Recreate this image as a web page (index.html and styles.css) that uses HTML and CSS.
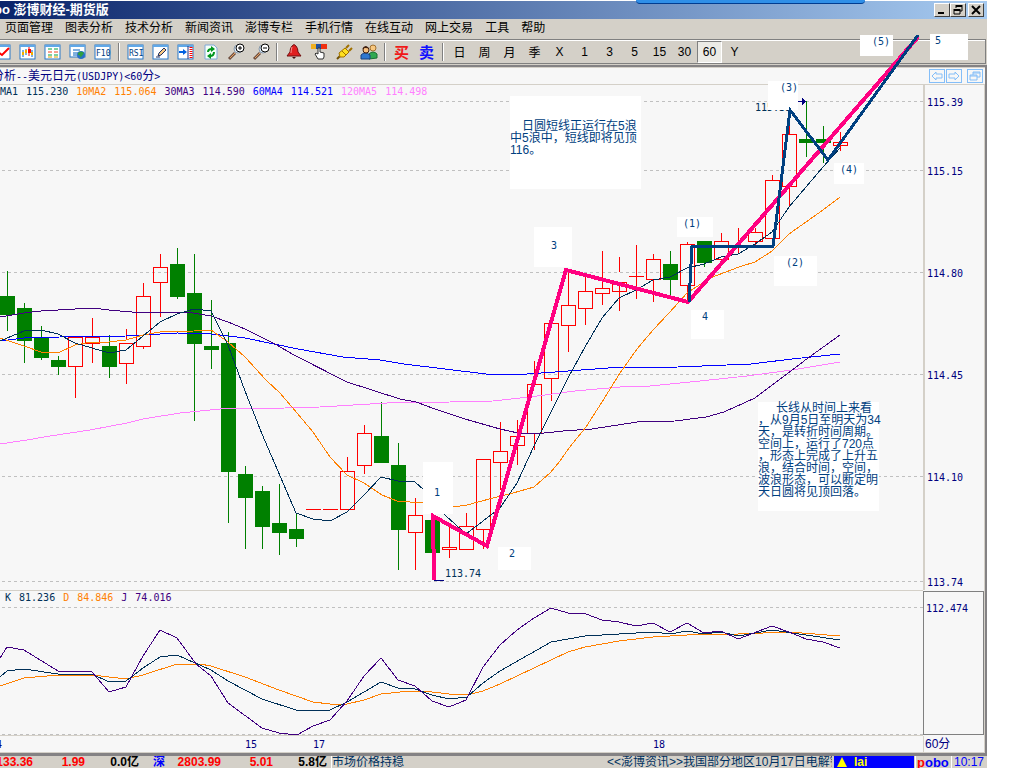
FILE: index.html
```
<!DOCTYPE html>
<html lang="zh-CN">
<head>
  <meta charset="UTF-8" />
  <title>澎博财经-期货版</title>
  <link rel="stylesheet" href="styles.css">
</head>
<body>
<div class="window">

  <!-- Title bar -->
  <header class="titlebar">
    <span class="app-name">bo 澎博财经-期货版</span>
    <span class="dock-tab"></span>
    <div class="win-btns">
      <button aria-label="最小化"><svg width="12" height="10"><path d="M2 8H8" stroke="#000" stroke-width="2"/></svg></button>
      <button aria-label="还原"><svg width="12" height="10"><path d="M4 0H10V2H4ZM2 4H8V6H2Z" fill="#000"/><path d="M4 0V3M10 0V6H8M2 4V9H8V4" stroke="#000" fill="none"/></svg></button>
      <button class="close" aria-label="关闭"><svg width="12" height="10"><path d="M2 1L10 9M10 1L2 9" stroke="#000" stroke-width="2"/></svg></button>
    </div>
  </header>

  <!-- Menu -->
  <nav class="menu">
    <button>页面管理</button>
    <button>图表分析</button>
    <button>技术分析</button>
    <button>新闻资讯</button>
    <button>澎博专栏</button>
    <button>手机行情</button>
    <button>在线互动</button>
    <button>网上交易</button>
    <button>工具</button>
    <button>帮助</button>
  </nav>

  <!-- Toolbar -->
  <div class="toolbar">
    <button aria-label="走势图"><svg class="ico"><rect class="frame" x="0" y="1" width="15" height="14"/><path d="M0 2H15" class="frame-top"/><path d="M3 8L7 11L14 4" stroke="red" stroke-width="2" fill="none"/></svg></button>
    <button aria-label="K线图"><svg class="ico"><rect class="frame" x="0" y="1" width="15" height="14"/><path d="M0 2H15" class="frame-top"/><path d="M3 6V13M6 5V11M12 6V13" stroke="#0060c0"/><path d="M2 8H4V11H2ZM5 6H7V9H5ZM11 8H13V11H11Z" fill="#f0b000"/><path d="M9 3V12" stroke="red"/><path d="M8 5H11V9H8Z" fill="red"/></svg></button>
    <button aria-label="报价表"><svg class="ico"><rect class="frame" x="0" y="1" width="15" height="14"/><path d="M0 2H15" class="frame-top"/><path d="M3 5H7M9 5H13" stroke="#00a040"/><path d="M3 8H7M9 8H13" stroke="#f04020"/><path d="M3 11H7M9 11H13" stroke="#00a040"/><path d="M3 13H7M9 13H13" stroke="#e0a000"/></svg></button>
    <button aria-label="资讯"><svg class="ico"><rect class="frame" x="0" y="1" width="15" height="12"/><path d="M0 2H15" class="frame-top"/><path d="M3 6H10M3 9H8M3 11H7" stroke="#0060c0"/><circle cx="11" cy="11" r="4" fill="#2870c8"/><path d="M8 9Q11 6 14 9L12 12L10 14Q11 11 8 11Z" fill="#30a040"/></svg></button>
    <button aria-label="F10"><svg class="ico"><rect class="frame" x="0" y="1" width="15" height="14"/><path d="M0 2H15" class="frame-top"/><text x="1" y="12" class="ico-text">F10</text></svg></button>
    <i class="sep"></i>
    <button aria-label="RSI"><svg class="ico"><rect class="frame" x="0" y="1" width="15" height="14"/><path d="M0 2H15" class="frame-top"/><text x="1" y="12" class="ico-text">RSI</text></svg></button>
    <button aria-label="画线"><svg class="ico"><rect class="frame" x="0" y="1" width="15" height="14"/><path d="M0 2H15" class="frame-top"/><path d="M6 9L11 4L13 6L8 11L5 12Z" fill="#f8c880" stroke="#203060"/><path d="M3 13H7" stroke="#203060"/></svg></button>
    <button aria-label="右移"><svg class="ico"><rect class="frame" x="0" y="1" width="15" height="14"/><path d="M0 2H15" class="frame-top"/><path d="M1 8H6" stroke="#0060e0" stroke-width="2"/><path d="M5 5L9 8L5 11Z" fill="#0060e0"/><path d="M10 2V15" stroke="#203080"/><path d="M13 3V15" stroke="red" stroke-width="3" stroke-dasharray="1 1"/></svg></button>
    <button aria-label="刷新"><svg class="ico"><path d="M2 1H11L14 4V15H2Z" fill="#f4fff8" stroke="#80a8d8"/><path d="M5 8Q5 5 9 5M11 8Q11 12 7 12" stroke="#00961e" stroke-width="2" fill="none"/><path d="M8 2L12 5L8 8ZM8 9L4 12L8 15Z" fill="#00961e"/></svg></button>
    <button aria-label="放大"><svg class="ico"><path d="M1 15L7 9" stroke="#705040" stroke-width="3"/><path d="M2 14L7 9" stroke="#e8a060"/><circle cx="10" cy="5" r="4" fill="#d8e8f8" stroke="#8898a8"/><circle cx="12" cy="4" r="4" fill="#fff" stroke="#000"/><path d="M10 4H14M12 2V6" stroke="#000"/></svg></button>
    <button aria-label="缩小"><svg class="ico"><path d="M1 15L7 9" stroke="#705040" stroke-width="3"/><path d="M2 14L7 9" stroke="#e8a060"/><circle cx="10" cy="5" r="4" fill="#d8e8f8" stroke="#8898a8"/><circle cx="12" cy="4" r="4" fill="#fff" stroke="#000"/><path d="M10 4H14" stroke="#000"/></svg></button>
    <i class="sep"></i>
    <button aria-label="预警"><svg class="ico"><path d="M6 2Q8 -1 10 2Q12 4 12 8L15 12H1L4 8Q4 4 6 2Z" fill="#e02020" stroke="#701010"/><path d="M6 3Q5 6 5 9" stroke="#ff9090" fill="none"/><path d="M6 13H10L8 15Z" fill="#401010"/></svg></button>
    <button aria-label="交易"><svg class="ico"><rect x="0" y="0" width="5" height="5" fill="#f0b020"/><rect x="5" y="0" width="5" height="5" fill="#2050a0"/><rect x="10" y="0" width="6" height="5" fill="#f03010"/><path d="M7 15L4 10L5 9L7 10V4H9V8L13 9V13L12 15Z" fill="#fff" stroke="#303030"/></svg></button>
    <button aria-label="连接"><svg class="ico"><path d="M1 15L4 12" stroke="#705000" stroke-width="2"/><path d="M3 9L9 4L13 8L8 13L4 13Z" fill="#ffe020" stroke="#a07000"/><path d="M10 4L13 1M13 7L16 4" stroke="#a07000" stroke-width="2"/><path d="M6 7L10 11" stroke="#a07000"/></svg></button>
    <button aria-label="用户"><svg class="ico"><path d="M8 15V10Q12 6 16 10V14Z" fill="#30a850" stroke="#187030"/><circle cx="12" cy="4" r="3" fill="#f8c880" stroke="#a07030"/><path d="M0 15V11Q4 7 9 11V15Z" fill="#3078d0" stroke="#184080"/><circle cx="5" cy="6" r="3" fill="#f8c080" stroke="#402010"/><path d="M1 5Q5 -1 8 5Q5 3 1 5" fill="#402010"/></svg></button>
    <i class="sep"></i>
    <button class="buy">买</button>
    <button class="sell">卖</button>
    <i class="sep"></i>
    <button>日</button>
    <button>周</button>
    <button>月</button>
    <button>季</button>
    <button>X</button>
    <button>1</button>
    <button>3</button>
    <button>5</button>
    <button>15</button>
    <button>30</button>
    <button class="active">60</button>
    <button>Y</button>
  </div>

  <!-- Chart -->
  <main class="panel">
    <div class="panel-head">
      <h1>分析<span>--</span>美元日元<span>(USDJPY)&lt;60</span>分<span>&gt;</span></h1>
      <div class="panel-btns">
        <button aria-label="上一个"><svg width="14" height="12"><path d="M2 6L6 2V4H12V8H6V10Z"/></svg></button>
        <button aria-label="下一个"><svg width="14" height="12"><path d="M12 6L8 2V4H2V8H8V10Z"/></svg></button>
        <button class="restore" aria-label="还原图表"><svg width="14" height="12"><path d="M5 5V2H12V7H9M5 3H12M2 5H9V10H2ZM2 6H9"/></svg></button>
      </div>
    </div>

    <div class="charts">
      <section class="plot">
        <div class="legend">
          <span class="c-ma5">MA1</span><span class="c-ma5">115.230</span>
          <span class="c-ma10">10MA2</span><span class="c-ma10">115.064</span>
          <span class="c-ma30">30MA3</span><span class="c-ma30">114.590</span>
          <span class="c-ma60">60MA4</span><span class="c-ma60">114.521</span>
          <span class="c-ma120">120MA5</span><span class="c-ma120">114.498</span>
        </div>
        <svg class="price-plot">
          <g class="grid">
            <line x1="2" y1="16" x2="100%" y2="16"/>
            <line x1="2" y1="85" x2="100%" y2="85"/>
            <line x1="2" y1="187" x2="100%" y2="187"/>
            <line x1="2" y1="289" x2="100%" y2="289"/>
            <line x1="2" y1="391" x2="100%" y2="391"/>
            <line x1="2" y1="496" x2="100%" y2="496"/>
          </g>
          <g transform="translate(0 -85)">
            <!-- rising candles -->
            <g class="up">
              <path d="M75 367V398M92 318V337M92 344V363M126 329V340M126 364V384M143 283V296M143 347V349M160 254V267M160 283V317M347 457V471M364 425V433M364 466V474M415 498V515M415 533V570M449 527V547M449 550V558M466 513V526M483 530V549M500 422V451M500 463V490M517 420V436M517 446V465M534 361V384M534 434V450M551 379V401M568 270V305M568 326V352M585 275V291M585 309V325M602 251V288M602 294V305M619 257V272M619 282V311M636 245V299M653 254V259M653 280V302M687 242V244M687 286V304M721 233V241M738 228V253M755 228V232M755 242V246M772 175V180M789 124V134M789 187V206M840 132V142M840 146V151"/>
              <path d="M306 509H321M323 509H338M629 276H644M731 245H746"/>
              <path d="M68 337H82V366H68ZM85 337H99V343H85ZM119 343H133V363H119ZM136 296H150V346H136ZM153 267H167V282H153ZM340 471H354V509H340ZM357 433H371V465H357ZM408 515H422V532H408ZM442 547H456V549H442ZM459 526H473V549H459ZM476 459H490V529H476ZM493 451H507V462H493ZM510 436H524V445H510ZM527 384H541V433H527ZM544 323H558V378H544ZM561 305H575V325H561ZM578 291H592V308H578ZM595 288H609V293H595ZM612 282H626V291H612ZM646 259H660V279H646ZM680 244H694V285H680ZM714 241H728V259H714ZM748 232H762V241H748ZM765 180H779V238H765ZM782 134H796V186H782ZM833 142H847V145H833Z"/>
            </g>
            <!-- falling candles -->
            <g class="down">
              <path d="M7 271V331M24 303V363M41 326V360M58 356V375M109 335V378M177 248V299M194 254V421M211 300V369M228 332V523M245 466V549M262 486V549M279 484V555M296 513V547M381 402V463M398 443V570M432 520V553M670 251V297M704 241V267M806 101V157M823 126V163"/>
              <path class="body" d="M0 296H15V315H0ZM17 308H32V341H17ZM34 337H49V358H34ZM51 360H66V367H51ZM102 346H117V367H102ZM170 264H185V297H170ZM187 293H202V344H187ZM204 346H219V350H204ZM221 343H236V472H221ZM238 474H253V498H238ZM255 491H270V527H255ZM272 523H287V533H272ZM289 529H304V539H289ZM374 436H389V463H374ZM391 465H406V530H391ZM425 520H440V553H425ZM663 264H678V280H663ZM697 241H712V263H697ZM799 139H814V143H799ZM816 139H831V143H816Z"/>
            </g>
            <!-- moving averages -->
            <polyline class="l-ma120" points="0,444 27,440 50,436 90,430 127,423 143,419 180,413 220,409 285,408 320,407 387,403 450,402 493,401 520,398 545,395 575,391 620,387 650,386 700,381 747,376 792,370 840,362"/>
            <polyline class="l-ma60" points="0,341 24,338 60,337 126,336 143,335 177,333 211,334 245,338 298,349 343,357 380,360 404,364 453,370 486,374 527,374 555,372 608,368 678,367 751,364 792,359 840,354"/>
            <polyline class="l-ma30" points="0,317 24,313 41,311 75,309 92,308 109,310 143,313 160,312 187,312 211,316 228,322 245,329 275,344 294,355 347,382 400,399 416,402 435,409 465,419 500,429 518,433 535,434 563,431 592,429 637,422 675,421 706,417 724,412 755,398 808,358 840,335"/>
            <polyline class="l-ma10" points="0,338 24,346 41,352 58,353 75,345 92,342 109,342 126,340 143,335 160,332 194,331 211,330 228,342 245,357 266,380 280,393 297,413 313,432 330,457 347,475 364,483 382,495 397,501 423,503 453,507 467,505 493,498 513,493 534,487 550,473 560,461 569,448 586,427 602,402 620,373 637,349 653,330 669,313 687,293 710,278 739,267 755,262 772,251 789,234 806,222 823,210 840,197"/>
            <polyline class="l-ma5" points="0,341 24,331 41,330 58,334 75,343 92,348 109,353 126,350 143,336 160,322 177,314 194,309 211,311 228,345 245,391 262,434 296,513 313,519 330,521 347,512 364,495 381,477 398,481 415,482 424,490 445,515 466,534 483,521 500,508 517,483 534,446 551,412 568,378 585,347 602,318 619,298 636,290 653,280 670,277 687,268 704,264 721,257 738,254 755,244 772,232 789,207 806,187 823,167 840,148"/>
            <!-- high and low marks -->
            <path class="mark" d="M434 580H444M798 101H804"/>
            <path class="mark-head" d="M802 98L806 101L802 105Z"/>
            <text class="mark-text" x="445" y="577">113.74</text>
            <text class="mark-text" x="755" y="111">115.39</text>
          </g>
        </svg>
      </section>
      <svg class="axis price-axis">
        <text x="2" y="21">115.39</text>
        <text x="2" y="90">115.15</text>
        <text x="2" y="192">114.80</text>
        <text x="2" y="294">114.45</text>
        <text x="2" y="396">114.10</text>
        <text x="2" y="501">113.74</text>
      </svg>

      <section class="plot">
        <div class="legend kdj">
          <span class="c-ma5">K</span><span class="c-ma5">81.236</span>
          <span class="c-ma10">D</span><span class="c-ma10">84.846</span>
          <span class="c-ma30">J</span><span class="c-ma30">74.016</span>
        </div>
        <svg class="kdj-plot">
          <g class="grid">
            <line x1="2" y1="16" x2="100%" y2="16"/>
            <line x1="2" y1="143" x2="100%" y2="143"/>
          </g>
          <g transform="translate(0 -591)">
            <polyline class="l-ma10" points="0,686 24,678 58,675 92,675 109,677 126,679 143,675 177,664 200,664 211,666 245,677 279,690 313,702 330,704 347,704 364,700 381,694 410,691 432,692 449,694 467,695 483,691 500,684 534,668 568,652 585,647 619,641 653,637 687,635 710,634 738,634 789,632 840,636"/>
            <polyline class="l-ma5" points="0,677 7,671 24,669 58,674 92,674 109,682 126,681 143,668 160,657 177,655 211,670 228,681 262,699 296,710 330,710 347,702 364,692 381,682 398,688 415,689 432,695 449,699 467,697 483,683 500,671 551,642 585,636 619,634 653,632 670,634 687,631 704,634 721,632 738,636 772,630 840,640"/>
            <polyline class="l-ma30" points="0,658 7,647 24,650 58,671 92,672 109,692 126,687 143,656 160,630 177,638 196,664 211,676 228,703 262,728 279,733 297,735 313,726 330,720 347,701 364,676 381,658 398,680 415,686 432,701 449,707 466,700 483,667 500,645 517,630 534,618 551,608 568,613 586,614 602,620 619,622 636,626 653,623 670,632 687,623 704,633 721,631 738,639 772,626 789,632 806,639 823,642 840,648"/>
          </g>
        </svg>
      </section>
      <svg class="axis kdj-axis">
        <text x="2" y="20">112.474</text>
      </svg>

      <svg class="time-axis">
        <text x="-4" y="12">4</text>
        <text x="245" y="12">15</text>
        <text x="313" y="12">17</text>
        <text x="653" y="12">18</text>
      </svg>
      <div class="period">60分</div>
    </div>
  </main>

  <!-- Status bar -->
  <footer class="status">
    <div class="quotes">
      <span class="price">1133.36</span><span class="chg">1.99</span><span class="vol">0.0亿</span>
      <span class="mkt">深</span>
      <span class="price">2803.99</span><span class="chg">5.01</span><span class="vol">5.8亿</span>
    </div>
    <div class="news">
      <span>市场价格持稳</span>
      <span class="ticker">&lt;&lt;澎博资讯&gt;&gt;我国部分地区10月17日电解铜</span>
    </div>
    <div class="user"><svg width="12" height="12"><path d="M6 1L11 11H1Z" fill="#ff0"/></svg>lai</div>
    <div class="brand"><b>p</b>obo</div>
    <time>10:17</time>
  </footer>

  <!-- Notes and wave lines drawn over the chart -->
  <div class="note n-short">&emsp;日圆短线正运行在5浪<br>中5浪中，短线即将见顶<br>116。</div>
  <div class="note n-long">&emsp;&ensp;长线从时间上来看<br>，从9月5日至明天为34<br>天，是转折时间周期。<br>空间上，运行了720点<br>，形态上完成了上升五<br>浪，结合时间，空间，<br>波浪形态，可以断定明<br>天日圆将见顶回落。</div>
  <div class="note wave w1">1</div>
  <div class="note wave w2">2</div>
  <div class="note wave w3">3</div>
  <div class="note wave w4">4</div>
  <div class="note wave w5">5</div>
  <div class="note wave s1">(1)</div>
  <div class="note wave s2">(2)</div>
  <div class="note wave s3">(3)</div>
  <div class="note wave s4">(4)</div>
  <div class="note wave s5">(5)</div>
  <svg class="waves">
    <polyline class="wave-main" points="434,579 433,515 487,545 566,269 688,301 918,36"/>
    <polyline class="wave-sub" points="689,301 692,245 773,245 790,109 828,159 918,34"/>
  </svg>
</div>
</body>
</html>
```
FILE: styles.css
```
* {
  box-sizing: border-box;
}

body {
  margin: 0;
  background: #fff;
  font-family: "Liberation Sans", "Noto Sans CJK SC", sans-serif;
  font-size: 12px;
  color: #000;
  overflow: hidden;
}

button {
  font: inherit;
  color: inherit;
  padding: 0;
  margin: 0;
  border: none;
  background: none;
}

svg {
  display: block;
}

.window {
  position: relative;
  margin: 1px 37px 0 0;
  background: #d4d0c8;
}

/* title bar */
.titlebar {
  display: flex;
  align-items: center;
  justify-content: space-between;
  height: 18px;
  padding-right: 3px;
  background: linear-gradient(90deg, #0a246a, #a6caf0);
}

.app-name {
  margin-left: -6px;
  color: #fff;
  font-size: 13px;
  font-weight: bold;
  line-height: 18px;
  white-space: nowrap;
}

.dock-tab {
  position: absolute;
  top: -1px;
  left: 636px;
  width: 229px;
  height: 4px;
  background: #2f8fe8;
  border-bottom: 1px solid #003c90;
  border-radius: 0 0 4px 4px;
}

.win-btns {
  display: flex;
}

.win-btns button {
  width: 16px;
  height: 14px;
  padding: 1px;
  background: #d4d0c8;
  border: 1px solid;
  border-color: #fff #404040 #404040 #fff;
}

.win-btns .close {
  margin-left: 2px;
}

/* menu */
.menu {
  display: flex;
  gap: 12px;
  height: 20px;
  padding-left: 5px;
  line-height: 18px;
  white-space: nowrap;
}

.menu button {
  height: 18px;
}

/* toolbar */
.toolbar {
  display: flex;
  align-items: center;
  height: 25px;
  margin-right: 1px;
  border: 1px solid #808080;
  border-left: none;
  box-shadow: inset 0 1px #fff;
  overflow: hidden;
}

.toolbar button {
  flex: none;
  display: flex;
  align-items: center;
  justify-content: center;
  width: 25px;
  height: 22px;
}

.toolbar button:first-child {
  margin-left: -10px;
}

.ico {
  width: 16px;
  height: 16px;
  overflow: visible;
}

.frame {
  fill: #fff;
  stroke: #2878c8;
}

.frame-top {
  stroke: #60a8e8;
  stroke-width: 2;
}

.ico-text {
  font-family: "DejaVu Sans Mono", monospace;
  font-size: 8px;
  fill: #003c80;
}

.sep {
  flex: none;
  width: 2px;
  height: 18px;
  margin: 0 3px;
  background: #808080;
  border-right: 1px solid #fff;
}

.toolbar .buy,
.toolbar .sell {
  font-size: 15px;
  font-weight: bold;
  color: #f01818;
}

.toolbar .sell {
  color: #1010ff;
}

.toolbar .active {
  border: 1px solid;
  border-color: #808080 #fff #fff #808080;
  background: #ecebe6;
}

/* chart panel */
.panel {
  margin-top: 1px;
  background: #f7f7f7;
  border: solid #848284;
  border-width: 2px 2px 3px 0;
}

.panel-head {
  display: flex;
  align-items: center;
  justify-content: space-between;
  height: 18px;
  padding-right: 2px;
  border: solid #d4d0c8;
  border-width: 1px 0;
}

.panel-head h1 {
  margin: 0 0 0 -8px;
  font-size: 12px;
  font-weight: normal;
  line-height: 16px;
  color: #000080;
  white-space: nowrap;
}

.panel-head h1 span {
  font-family: "DejaVu Sans Mono", monospace;
  font-size: 10px;
}

.panel-btns {
  display: flex;
  gap: 1px;
}

.panel-btns button {
  border: 1px solid #84bef8;
}

.panel-btns .restore {
  margin-left: 4px;
}

.panel-btns path {
  fill: none;
  stroke: #84bef8;
}

.charts {
  display: grid;
  grid-template-columns: 1fr 61px;
  border-right: 1px solid #d4d0c8;
  border-bottom: 1px solid #d4d0c8;
}

.plot {
  position: relative;
  min-width: 0;
  border-bottom: 1px solid #d4d0c8;
}

.legend {
  position: absolute;
  top: 1px;
  left: 0;
  display: flex;
  gap: 8px;
  font-family: "DejaVu Sans Mono", monospace;
  font-size: 10px;
  line-height: 12px;
}

.kdj {
  padding-left: 5px;
}

.price-plot,
.kdj-plot {
  width: 100%;
  shape-rendering: crispEdges;
}

.price-plot,
.price-axis {
  height: 505px;
}

.kdj-plot,
.kdj-axis {
  height: 144px;
}

.axis {
  width: 100%;
  border-left: 2px solid #d4d0c8;
}

.kdj-axis {
  border: 1px solid #808080;
}

.axis text,
.time-axis text,
.mark-text {
  font-family: "DejaVu Sans Mono", monospace;
  font-size: 10px;
  fill: #000080;
}

.time-axis {
  width: 100%;
  height: 16px;
}

.period {
  padding-left: 1px;
  line-height: 16px;
  color: #000080;
  border-left: 1px solid #d4d0c8;
}

.grid line {
  stroke: #c0c0c0;
  stroke-dasharray: 3 3;
}

.up {
  fill: none;
  stroke: #f00;
}

.down {
  stroke: #008000;
}

.body {
  fill: #008000;
  stroke: none;
}

polyline {
  fill: none;
}

.c-ma5 { color: #003058; }
.c-ma10 { color: #ff8000; }
.c-ma30 { color: #400080; }
.c-ma60 { color: #0000ff; }
.c-ma120 { color: #ff80ff; }

.l-ma5 { stroke: #003058; }
.l-ma10 { stroke: #ff8000; }
.l-ma30 { stroke: #400080; }
.l-ma60 { stroke: #0000ff; }
.l-ma120 { stroke: #ff80ff; }

.mark {
  stroke: #000080;
}

.mark-head {
  fill: #000080;
}

.mark-text {
  fill: #003058;
}

/* status bar */
.status {
  display: flex;
  height: 13px;
  line-height: 13px;
  white-space: nowrap;
  overflow: hidden;
}

.quotes {
  display: flex;
  flex: none;
  margin-left: -23px;
  padding-right: 4px;
  font-weight: bold;
  color: #f00;
  text-align: right;
}

.price { width: 56px; }
.chg { width: 52px; }

.vol {
  width: 54px;
  color: #000;
}

.mkt {
  width: 26px;
  color: #00f;
}

.news {
  display: flex;
  flex: 1;
  justify-content: space-between;
  min-width: 0;
  padding-right: 2px;
  border-left: 1px solid #fff;
  color: #003060;
}

.ticker {
  width: 225px;
  overflow: hidden;
}

.user {
  display: flex;
  gap: 6px;
  width: 80px;
  padding-left: 2px;
  background: #00f;
  color: #ff0;
  font-weight: bold;
}

.brand {
  width: 36px;
  margin-left: 1px;
  padding-left: 1px;
  border-left: 1px solid #fff;
  font-size: 13px;
  font-weight: bold;
  color: #00f;
}

.brand b {
  color: #f00;
}

time {
  width: 36px;
  padding-left: 2px;
  border-left: 1px solid #fff;
  color: #00f;
}

/* notes, placed freely over the chart */
.note {
  position: absolute;
  background: #fff;
  color: #004080;
  line-height: 12px;
  white-space: nowrap;
}

.n-short {
  left: 510px;
  top: 95px;
  width: 131px;
  height: 93px;
  padding-top: 24px;
}

.n-long {
  left: 758px;
  top: 401px;
  width: 121px;
  height: 109px;
}

.wave {
  font-family: "DejaVu Sans Mono", monospace;
  font-size: 10px;
}

.w1 { left: 423px; top: 461px; width: 30px; height: 52px; padding: 25px 0 0 11px; }
.w2 { left: 498px; top: 546px; width: 33px; height: 23px; padding: 1px 0 0 11px; }
.w3 { left: 534px; top: 226px; width: 38px; height: 40px; padding: 13px 0 0 17px; }
.w4 { left: 691px; top: 309px; width: 33px; height: 29px; padding: 1px 0 0 11px; }
.w5 { left: 930px; top: 33px; width: 38px; height: 26px; padding: 1px 0 0 5px; }
.s1 { left: 677px; top: 216px; width: 36px; height: 20px; padding: 1px 0 0 6px; }
.s2 { left: 774px; top: 255px; width: 43px; height: 30px; padding: 1px 0 0 12px; }
.s3 { left: 768px; top: 80px; width: 30px; height: 29px; padding: 1px 0 0 12px; }
.s4 { left: 834px; top: 162px; width: 30px; height: 21px; padding: 1px 0 0 6px; }
.s5 { left: 860px; top: 34px; width: 33px; height: 21px; padding: 1px 0 0 12px; }

.waves {
  position: absolute;
  top: 0;
  left: 0;
  width: 100%;
  height: 100%;
  pointer-events: none;
  shape-rendering: crispEdges;
}

.wave-main {
  stroke: #ff0080;
  stroke-width: 4;
}

.wave-sub {
  stroke: #004080;
  stroke-width: 3;
}
```
